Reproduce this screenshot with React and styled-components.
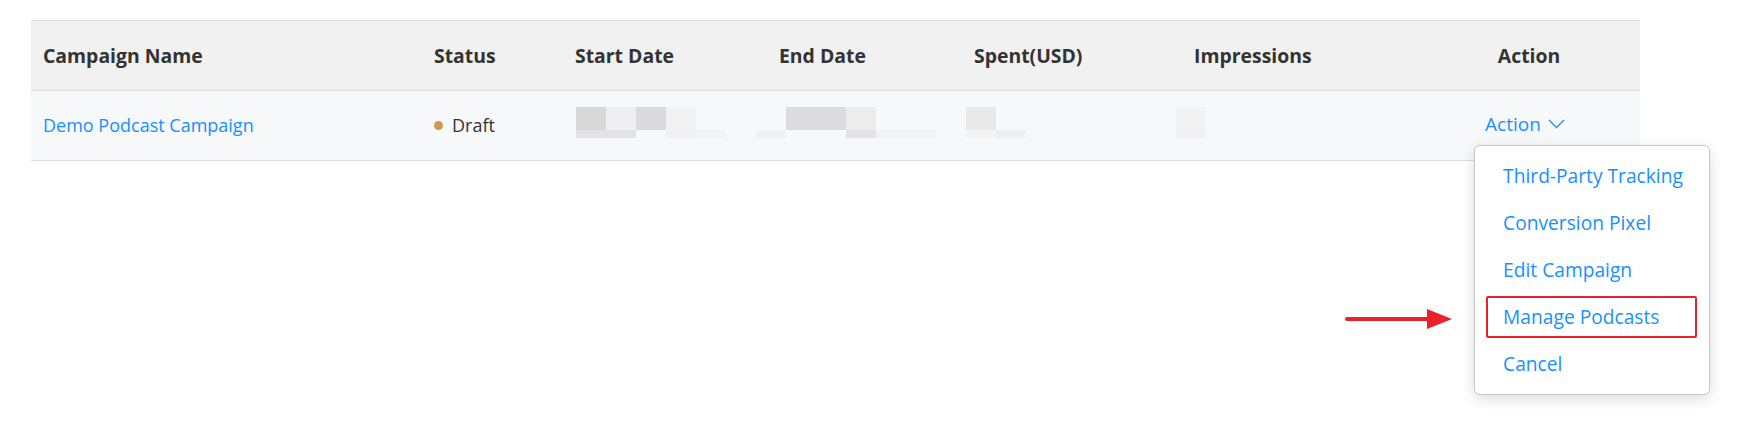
import React from "react";
import styled, { createGlobalStyle } from "styled-components";

const GlobalStyle = createGlobalStyle`
  html, body { margin: 0; padding: 0; background: #ffffff; }
  body { font-family: "Open Sans", "Noto Sans", sans-serif; }
`;

const BLUE = "#1890ff";
const RED = "#e8212b";

const Page = styled.div`
  width: 1748px;
  height: 439px;
  box-sizing: border-box;
  padding: 20px 0 0 31px;
`;

const Table = styled.div`
  width: 1609px;
  display: grid;
  grid-template-columns: 391px 141px 204px 195px 220px 236px 222px;
  border-top: 1px solid #dcdcdc;
`;

const HeadCell = styled.div`
  box-sizing: border-box;
  height: 70px;
  background: #f1f1f1;
  border-bottom: 1px solid #dcdcdc;
  display: flex;
  align-items: center;
  justify-content: ${(p) => (p.$center ? "center" : "flex-start")};
  padding: 0 12px;
  font-weight: 700;
  font-size: 19.4px;
  color: #333333;
  white-space: nowrap;
`;

const BodyCell = styled.div`
  box-sizing: border-box;
  height: 70px;
  background: #f7f8fa;
  border-bottom: 1px solid #dcdcdc;
  display: flex;
  align-items: center;
  justify-content: ${(p) => (p.$center ? "center" : "flex-start")};
  padding: 0 ${(p) => (p.$center ? "20px" : "12px")} ${(p) => (p.$center ? "4px" : "2px")} 12px;
  font-size: 18px;
  color: #333333;
  white-space: nowrap;
`;

const NameLink = styled.a`
  color: ${BLUE};
  text-decoration: none;
  cursor: pointer;
`;

const Status = styled.span`
  display: inline-flex;
  align-items: center;
  gap: 9px;
`;

const Dot = styled.span`
  width: 9px;
  height: 9px;
  border-radius: 50%;
  background: #d09848;
  margin-top: 1px;
`;

const Mosaic = styled.div`
  align-self: flex-start;
  margin-top: 16px;
  margin-left: ${(p) => p.$dx}px;
  display: grid;
  grid-template-columns: repeat(${(p) => p.$cols}, 30px);
  grid-template-rows: 23px 8px;
`;

const Tile = styled.span`
  background: ${(p) => p.$c || "transparent"};
`;

const ActionWrap = styled.div`
  position: relative;
  display: inline-flex;
  align-items: center;
  gap: 7px;
  color: ${BLUE};
  font-size: 19px;
  line-height: 24px;
  cursor: pointer;
`;

const Menu = styled.div`
  position: absolute;
  top: calc(100% + 9px);
  left: -11px;
  z-index: 5;
  box-sizing: border-box;
  width: 236px;
  padding: 7px 0 6px;
  background: #ffffff;
  border: 1px solid #c6c6c6;
  border-radius: 6px;
  box-shadow: 0 4px 14px rgba(0, 0, 0, 0.14);
`;

const MenuItem = styled.div`
  position: relative;
  box-sizing: border-box;
  height: 47px;
  padding: 2px 12px 3px 11px;
  display: flex;
`;

const ItemLabel = styled.div`
  flex: 1;
  display: flex;
  align-items: center;
  padding: 0 14px 0 15px;
  border: 2px solid ${(p) => (p.$marked ? RED : "transparent")};
  border-radius: 2px;
  font-size: 19.2px;
  color: ${BLUE};
  white-space: nowrap;
`;

const Pointer = styled.svg`
  position: absolute;
  right: calc(100% + 22px);
  top: calc(50% - 9.5px);
`;

const Chevron = () => (
  <svg width="17" height="10" viewBox="0 0 17 10" fill="none">
    <polyline points="1,1 8.5,8.5 16,1" stroke={BLUE} strokeWidth="1.3" />
  </svg>
);

const mosaics = {
  start: {
    dx: 1,
    top: ["#d8d8d6", "#efeff1", "#dadadc", "#f2f2f3", null],
    bottom: ["#e3e3e5", "#e3e3e5", null, "#f0f0f2", "#f3f3f4"],
  },
  end: {
    dx: -23,
    top: [null, "#dcdcde", "#dcdcde", "#ececed", null, null],
    bottom: ["#f1f1f2", null, null, "#e2e2e4", "#f3f3f4", "#f3f3f4"],
  },
  spent: {
    dx: -8,
    top: ["#e9e9e9", null],
    bottom: ["#f3f3f3", "#efeff1"],
  },
  impressions: {
    dx: -18,
    top: ["#f2f2f3"],
    bottom: ["#f0f0f2"],
  },
};

const Censored = ({ m }) => (
  <Mosaic $dx={m.dx} $cols={m.top.length}>
    {m.top.map((c, i) => (
      <Tile key={"t" + i} $c={c} />
    ))}
    {m.bottom.map((c, i) => (
      <Tile key={"b" + i} $c={c} />
    ))}
  </Mosaic>
);

const headers = [
  "Campaign Name",
  "Status",
  "Start Date",
  "End Date",
  "Spent(USD)",
  "Impressions",
];

const menuItems = [
  "Third-Party Tracking",
  "Conversion Pixel",
  "Edit Campaign",
  "Manage Podcasts",
  "Cancel",
];

export default function App() {
  return (
    <>
      <GlobalStyle />
      <Page>
        <Table>
          {headers.map((h) => (
            <HeadCell key={h}>{h}</HeadCell>
          ))}
          <HeadCell $center>Action</HeadCell>

          <BodyCell>
            <NameLink>Demo Podcast Campaign</NameLink>
          </BodyCell>
          <BodyCell>
            <Status>
              <Dot />
              Draft
            </Status>
          </BodyCell>
          <BodyCell>
            <Censored m={mosaics.start} />
          </BodyCell>
          <BodyCell>
            <Censored m={mosaics.end} />
          </BodyCell>
          <BodyCell>
            <Censored m={mosaics.spent} />
          </BodyCell>
          <BodyCell>
            <Censored m={mosaics.impressions} />
          </BodyCell>
          <BodyCell $center>
            <ActionWrap>
              Action
              <Chevron />
              <Menu>
                {menuItems.map((item) => {
                  const marked = item === "Manage Podcasts";
                  return (
                    <MenuItem key={item}>
                      {marked && (
                        <Pointer width="108" height="22" viewBox="0 0 108 22">
                          <line
                            x1="2"
                            y1="11"
                            x2="86"
                            y2="11"
                            stroke={RED}
                            strokeWidth="4"
                            strokeLinecap="round"
                          />
                          <polygon points="82,1 107,11 82,21" fill={RED} />
                        </Pointer>
                      )}
                      <ItemLabel $marked={marked}>{item}</ItemLabel>
                    </MenuItem>
                  );
                })}
              </Menu>
            </ActionWrap>
          </BodyCell>
        </Table>
      </Page>
    </>
  );
}
